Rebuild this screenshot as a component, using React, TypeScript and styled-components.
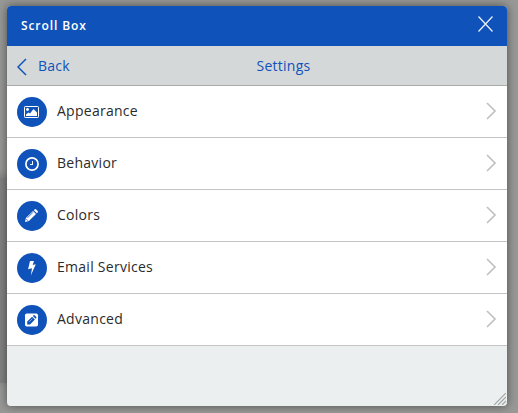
import React from "react";
import styled, { createGlobalStyle } from "styled-components";

const blue = "#0f52ba";

const Global = createGlobalStyle`
  body {
    margin: 0;
    background: #989897;
    overflow: hidden;
    font-family: "Open Sans", "Noto Sans", sans-serif;
  }
  * { box-sizing: border-box; }
`;

const Page = styled.div`
  position: relative;
  height: 413px;
  padding: 6px 11px 7px 7px;
`;

const Backdrop = styled.div`
  position: absolute;
  left: -20px;
  top: 178px;
  width: 60px;
  height: 205px;
  background: #828282;
  box-shadow: 0 -2px 7px 1px rgba(100, 100, 100, 0.4);
`;

const Shadow = styled.div`
  position: relative;
  width: 500px;
  border-radius: 4px;
  box-shadow: 0 0 10px rgba(0, 0, 0, 0.5);
`;

const Dialog = styled.section`
  position: relative;
  display: flex;
  flex-direction: column;
  height: 400px;
  overflow: hidden;
  border-radius: 4px;
  background: #ebeff0;
`;

const TitleBar = styled.header`
  display: flex;
  flex: none;
  align-items: center;
  justify-content: space-between;
  height: 40px;
  padding: 0 14px;
  background: ${blue};
  color: #fff;
`;

const Title = styled.h1`
  margin: 0;
  font-size: 12px;
  font-weight: 600;
  line-height: 40px;
  letter-spacing: 0.9px;
`;

const IconButton = styled.button`
  display: flex;
  margin: -4px 0 0;
  padding: 0;
  border: 0;
  background: none;
`;

const NavBar = styled.nav`
  display: flex;
  flex: none;
  height: 40px;
  padding: 0 10px;
  border-bottom: 1px solid #a9abab;
  background: #d4d8d8;
  color: ${blue};
  font-size: 14px;
  line-height: 39px;
  letter-spacing: 0.27px;
`;

const Back = styled.a`
  display: flex;
  align-items: center;
  gap: 11px;

  svg { margin-top: 3px; }
`;

const NavTitle = styled.span`
  flex: 1;
  text-align: center;
`;

const List = styled.ul`
  margin: 0;
  padding: 0;
  list-style: none;
`;

const Row = styled.li`
  display: flex;
  height: 52px;
  padding: 0 10px;
  border-bottom: 1px solid #c4c4c4;
  background: #fff;
`;

const Badge = styled.span`
  display: grid;
  place-items: center;
  width: 30px;
  height: 30px;
  margin: 11px 10px 0 0;
  border-radius: 50%;
  background: ${blue};
  color: #fff;
`;

const Label = styled.span`
  flex: 1;
  color: #2b2b2b;
  font-size: 14px;
  line-height: 50px;
  letter-spacing: 0.27px;
`;

const ArrowSlot = styled.span`
  display: flex;
  align-items: center;
  padding: 0 1px 1px 0;
`;

const Grip = styled.svg`
  position: absolute;
  right: 1px;
  bottom: 1px;
`;

const Chevron = ({ back = false }: { back?: boolean }) => (
  <svg width="10" height="18" viewBox="0 0 10 18" fill="none" stroke={back ? blue : "#c1c1c1"} strokeWidth={back ? 1.5 : 1.7}>
    <path d={back ? "M9 1 1 9l8 8" : "M1 1l8 8-8 8"} />
  </svg>
);

const Glyph = ({ children }: { children: React.ReactNode }) => (
  <svg width="16" height="16" viewBox="0 0 16 16" fill="currentColor">{children}</svg>
);

const items = [
  {
    label: "Appearance",
    icon: (
      <Glyph>
        <rect x="0.5" y="2.5" width="14" height="11" rx="0.8" fill="none" stroke="currentColor" />
        <circle cx="3.5" cy="5.5" r="1.4" />
        <path d="M2 12V10.5l2.5-2 1.5 1L9.5 5 13 8.5V12z" />
      </Glyph>
    ),
  },
  {
    label: "Behavior",
    icon: (
      <Glyph>
        <circle cx="8" cy="8" r="6.1" fill="none" stroke="currentColor" strokeWidth="1.7" />
        <path d="M8 5h1v4H6V8h2z" />
      </Glyph>
    ),
  },
  {
    label: "Colors",
    icon: (
      <Glyph>
        <path d="M1 14l.9-4L9 3l3 3-7.1 7.1z" />
        <path d="M9.8 2.2l.8-.8q.8-.7 1.6 0L13.7 3q.7.8 0 1.5l-.9.8z" />
        <path d="M3.5 9.8 9 4.3M2.3 11.1l1.6 1.6" fill="none" stroke={blue} strokeWidth="0.8" />
      </Glyph>
    ),
  },
  {
    label: "Email Services",
    icon: (
      <Glyph>
        <path d="M6 1h4L8.7 5l3.1-.7-5 11.2L8 8.3l-3.9.9z" />
      </Glyph>
    ),
  },
  {
    label: "Advanced",
    icon: (
      <Glyph>
        <rect x="1" y="1.5" width="13" height="13" rx="1.8" />
        <path d="M3.2 12.4V9.6l4.9-4.9 2.8 2.8L6 12.4zM8.8 4l.8-.7q.5-.4 1 0l1.7 1.7q.5.5 0 1l-.7.8z" fill={blue} />
        <path d="M5.2 9.8 8.4 6.6" stroke="#fff" strokeWidth="0.5" />
      </Glyph>
    ),
  },
];

export default function App() {
  return (
    <Page>
      <Global />
      <Backdrop />
      <Shadow>
        <Dialog>
          <TitleBar>
            <Title>Scroll Box</Title>
            <IconButton aria-label="Close">
              <svg width="15" height="16" viewBox="0 0 15 16" stroke="#e8effa" strokeWidth="1.3">
                <path d="M.5.5l14 15M14.5.5l-14 15" />
              </svg>
            </IconButton>
          </TitleBar>
          <NavBar>
            <Back><Chevron back />Back</Back>
            <NavTitle>Settings</NavTitle>
          </NavBar>
          <List>
            {items.map(({ label, icon }) => (
              <Row key={label}>
                <Badge>{icon}</Badge>
                <Label>{label}</Label>
                <ArrowSlot><Chevron /></ArrowSlot>
              </Row>
            ))}
          </List>
          <Grip width="12" height="12" viewBox="0 0 12 12" stroke="#a3a5a5" strokeWidth="1.2">
            <path d="M0 12 12 0M4 12l8-8M8 12l4-4" />
          </Grip>
        </Dialog>
      </Shadow>
    </Page>
  );
}
